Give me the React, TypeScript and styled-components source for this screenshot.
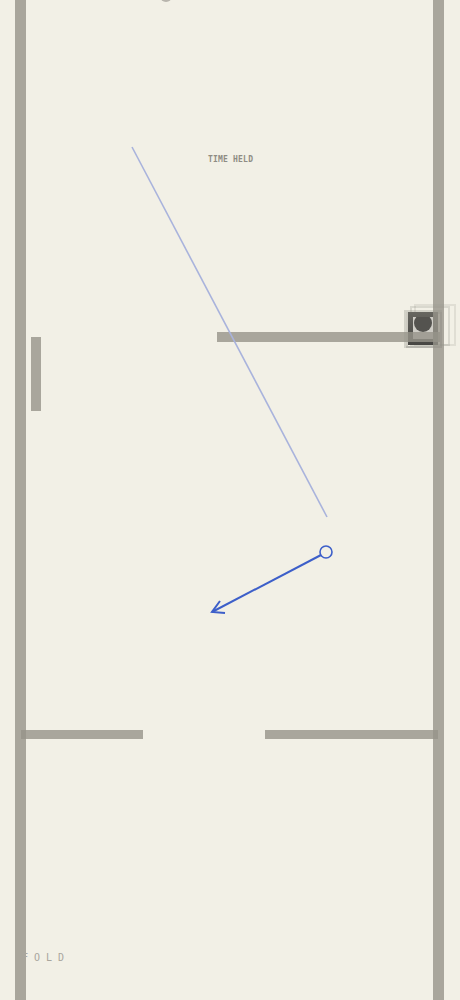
import React from 'react';
import styled, { createGlobalStyle } from 'styled-components';

const GlobalStyle = createGlobalStyle`
  html, body {
    margin: 0;
    padding: 0;
    background: #f2f0e6;
  }
  body {
    font-family: "DejaVu Sans Mono", "Liberation Mono", monospace;
  }
`;

const Stage = styled.div`
  position: relative;
  width: 460px;
  height: 1000px;
  overflow: hidden;
  background: #f2f0e6;
`;

const Map = styled.svg`
  position: absolute;
  inset: 0;
`;

const Label = styled.div`
  position: absolute;
  left: 208px;
  top: 155px;
  font-size: 8px;
  font-weight: bold;
  letter-spacing: 0.2px;
  color: #8f8c84;
`;

const FoldLabel = styled.div`
  position: absolute;
  left: 22px;
  top: 952px;
  font-size: 10px;
  letter-spacing: 6px;
  color: #a9a69e;
`;

// the block and its fading trail
const Player = styled.div`
  position: absolute;
  left: 400px;
  top: 300px;
  width: 58px;
  height: 54px;
  filter: blur(0.5px);
`;

const Ghost = styled.div<{ $x: number; $y: number; $s: number; $o: number }>`
  position: absolute;
  left: ${p => p.$x}px;
  top: ${p => p.$y}px;
  width: ${p => p.$s}px;
  height: ${p => p.$s}px;
  border: 2px solid rgba(120, 118, 112, ${p => p.$o});
  box-sizing: border-box;
`;

const Core = styled.div`
  position: absolute;
  left: 8px;
  top: 12px;
  width: 30px;
  height: 33px;
  background: linear-gradient(180deg, #676660 0%, #474643 100%);
  box-sizing: border-box;
  padding: 5px 5px 6px;
  display: flex;
`;

const Inner = styled.div`
  flex: 1;
  background: #cfcdc6;
  position: relative;
  overflow: hidden;
  &::before {
    content: '';
    position: absolute;
    left: 1px;
    top: -3px;
    width: 18px;
    height: 18px;
    border-radius: 50%;
    background: #54534f;
  }
`;

const walls = [
  { x: 15, y: 0, w: 11, h: 1000 },
  { x: 433, y: 0, w: 11, h: 1000 },
  { x: 31, y: 337, w: 10, h: 74 },
  { x: 217, y: 332, w: 223, h: 10 },
  { x: 21, y: 730, w: 122, h: 9 },
  { x: 265, y: 730, w: 173, h: 9 },
];

export default function App() {
  return (
    <>
      <GlobalStyle />
      <Stage>
        <Player>
          <Ghost $x={14} $y={4} $s={42} $o={0.15} />
          <Ghost $x={10} $y={6} $s={40} $o={0.2} />
          <Ghost $x={4} $y={10} $s={38} $o={0.25} />
          <Ghost $x={6} $y={12} $s={36} $o={0.3} />
          <Core>
            <Inner />
          </Core>
        </Player>

        <Map width="460" height="1000">
          <circle cx="166" cy="-4" r="6" fill="#b8b5ad" />
          {walls.map((w, i) => (
            <rect key={i} x={w.x} y={w.y} width={w.w} height={w.h} fill="#96938a" fillOpacity="0.8" />
          ))}
          <line x1="132" y1="147" x2="327" y2="517" stroke="#a9b3dc" strokeWidth="1.6" />
          <line x1="321" y1="555" x2="212" y2="612" stroke="#3d5fc9" strokeWidth="2" />
          <polyline points="220,601 212,612 225,613" fill="none" stroke="#3d5fc9" strokeWidth="2" />
          <circle cx="326" cy="552" r="6" fill="none" stroke="#3d5fc9" strokeWidth="1.6" />
        </Map>

        <Label>TIME HELD</Label>
        <FoldLabel>FOLD</FoldLabel>
      </Stage>
    </>
  );
}
